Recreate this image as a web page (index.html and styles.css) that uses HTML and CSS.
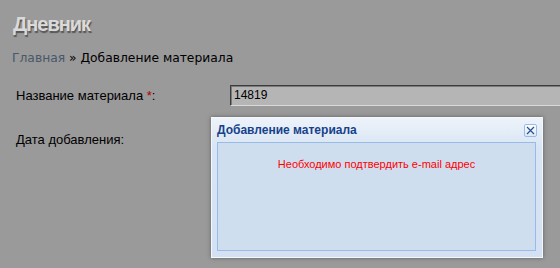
FILE: index.html
```html
<!DOCTYPE html>
<html lang="ru">

<head>
  <meta charset="UTF-8">
  <title>Дневник</title>
  <link rel="stylesheet" href="styles.css">
</head>

<body>
  <h1 class="title">Дневник</h1>
  <div class="crumbs"><a href="#">Главная</a> » Добавление материала</div>

  <div class="form">
    <div class="row">
      <label class="lbl">Название материала <span class="req">*</span>:</label>
      <input type="text" class="field" value="14819">
    </div>
    <div class="row">
      <label class="lbl">Дата добавления:</label>
    </div>
  </div>

  <div class="dialog">
    <div class="dlg-head">
      <span class="dlg-title">Добавление материала</span>
      <span class="dlg-close">
        <svg width="9" height="9" viewBox="0 0 9 9"><path d="M1 1L8 8M8 1L1 8" stroke="#2a4f8f" stroke-width="1.2"/></svg>
      </span>
    </div>
    <div class="dlg-body">
      <div class="dlg-msg">Необходимо подтвердить e-mail адрес</div>
    </div>
  </div>
</body>

</html>
```

FILE: styles.css
```css
body {
  margin: 0;
  background-color: #9a9a9a;
  font-family: "DejaVu Sans", Tahoma, sans-serif;
  font-size: 12px;
  color: #000;
  overflow: hidden;
  position: relative;
  height: 268px;
}

.title {
  margin: 0;
  padding: 12px 0 0 13px;
  font-family: "Liberation Sans", Arial, sans-serif;
  font-size: 20px;
  font-weight: bold;
  letter-spacing: -1px;
  color: #dadada;
  text-shadow: 1px 2px 1px #555;
  line-height: 24px;
}

.crumbs {
  margin: 14px 0 0 12px;
  line-height: 16px;
  font-size: 12.3px;
}

.crumbs a {
  color: #475868;
  text-decoration: none;
}

.form {
  margin-top: 18px;
  padding-left: 16px;
}

.row {
  display: flex;
  align-items: center;
  height: 22px;
  margin-bottom: 22px;
}

.lbl {
  flex: none;
  width: 214px;
  font-family: "Liberation Sans", Arial, sans-serif;
  font-size: 13px;
}

.req {
  color: #b00000;
}

.field {
  flex: none;
  width: 340px;
  height: 21px;
  box-sizing: border-box;
  padding: 1px 3px;
  font-family: "Liberation Sans", Arial, sans-serif;
  font-size: 12px;
  background: #b5b5b5;
  border: 1px solid #3c3c3c;
  border-right-color: #d8d8d8;
  border-bottom-color: #d8d8d8;
  box-shadow: inset 1px 1px 0 #7a7a7a;
}

.dialog {
  position: absolute;
  left: 211px;
  top: 117px;
  width: 332px;
  height: 141px;
  box-sizing: border-box;
  padding: 0 6px 6px 5px;
  background: linear-gradient(to bottom, #eef3fa, #d8e5f4 30px, #d3e1f2);
  border: 1px solid #f4f8fc;
  box-shadow: 0 0 4px rgba(60, 60, 60, 0.6);
  display: flex;
  flex-direction: column;
}

.dlg-head {
  display: flex;
  justify-content: space-between;
  align-items: center;
  height: 24px;
}

.dlg-title {
  font-family: "Liberation Sans", Arial, sans-serif;
  font-size: 12px;
  font-weight: bold;
  color: #15428b;
}

.dlg-close {
  width: 13px;
  height: 13px;
  box-sizing: border-box;
  border: 1px solid #99bbe8;
  border-radius: 2px;
  background: linear-gradient(to bottom, #fbfdff, #dce8f6);
  display: flex;
  align-items: center;
  justify-content: center;
  margin-right: -1px;
}

.dlg-body {
  flex: 1;
  background: #cfdeef;
  border: 1px solid #99bbe8;
}

.dlg-msg {
  text-align: center;
  font-family: "Liberation Sans", Arial, sans-serif;
  font-size: 11px;
  color: #ff0000;
  margin-top: 15px;
}
```
